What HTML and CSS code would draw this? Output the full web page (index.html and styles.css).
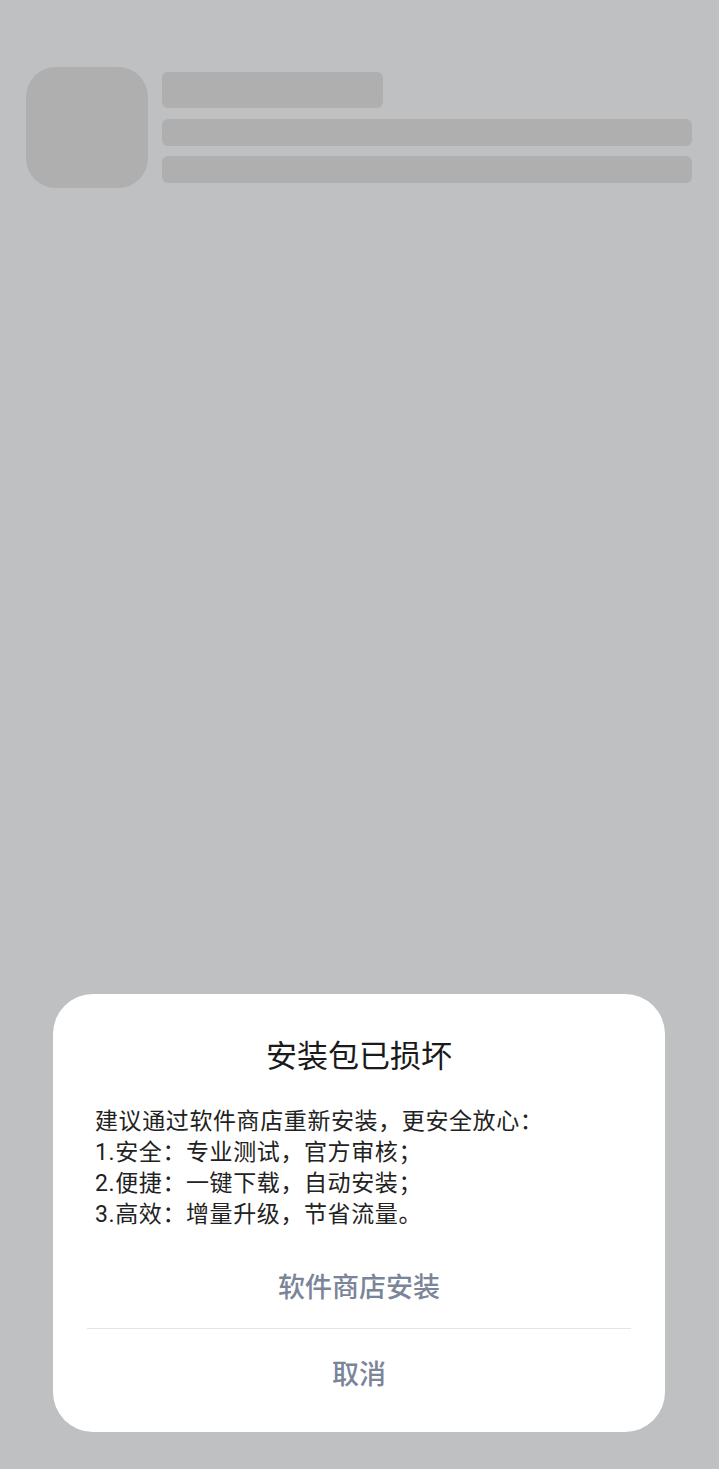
FILE: index.html
```html
<!DOCTYPE html>
<html lang="zh-CN">
<head>
    <meta charset="UTF-8">
    <meta name="viewport" content="width=device-width, initial-scale=1.0">
    <title>安装包已损坏</title>
    <link rel="stylesheet" href="styles.css">
</head>
<body>
    <div class="screen">
        <div class="skeleton">
            <div class="skeleton-icon"></div>
            <div class="skeleton-lines">
                <div class="bar bar-title"></div>
                <div class="bar"></div>
                <div class="bar"></div>
            </div>
        </div>

        <div class="dialog">
            <h1 class="dialog-title">安装包已损坏</h1>
            <div class="dialog-body">
                <p>建议通过软件商店重新安装，更安全放心：</p>
                <p>1.安全：专业测试，官方审核；</p>
                <p>2.便捷：一键下载，自动安装；</p>
                <p>3.高效：增量升级，节省流量。</p>
            </div>
            <button class="dialog-button" type="button">软件商店安装</button>
            <div class="divider"></div>
            <button class="dialog-button" type="button">取消</button>
        </div>
    </div>
</body>
</html>
```

FILE: styles.css
```css
html, body {
    margin: 0;
    padding: 0;
}
body {
    background-color: #bfc0c2;
    font-family: Roboto, "Noto Sans CJK SC", sans-serif;
}
.screen {
    height: 1469px;
    display: flex;
    flex-direction: column;
}
.skeleton {
    display: flex;
    gap: 14px;
    padding: 67px 27px 0 26px;
}
.skeleton-icon {
    width: 122px;
    height: 121px;
    border-radius: 30px;
    background-color: #afafaf;
    flex-shrink: 0;
}
.skeleton-lines {
    flex: 1;
    display: flex;
    flex-direction: column;
    gap: 10px;
    padding-top: 5px;
}
.bar {
    height: 27px;
    border-radius: 6px;
    background-color: #afafaf;
}
.bar-title {
    width: 221px;
    height: 36px;
    margin-bottom: 1px;
}
.dialog {
    margin: auto 54px 37px 53px;
    background-color: #ffffff;
    border-radius: 40px;
    padding: 43px 0 17px;
    display: flex;
    flex-direction: column;
}
.dialog-title {
    margin: 0;
    text-align: center;
    font-size: 31px;
    font-weight: 400;
    line-height: 40px;
    color: #1a1a1a;
}
.dialog-body {
    padding: 29px 42px 0;
    font-size: 23px;
    line-height: 31px;
    letter-spacing: 0.6px;
    color: #222222;
}
.dialog-body p {
    margin: 0;
}
.dialog-button {
    height: 86px;
    border: none;
    background: none;
    font-family: inherit;
    font-size: 27px;
    font-weight: 500;
    color: #7a8599;
    cursor: pointer;
}
.dialog-body + .dialog-button {
    margin-top: 12px;
}
.divider {
    height: 1px;
    margin: 0 34px;
    background-color: #e4e4e4;
}
```
